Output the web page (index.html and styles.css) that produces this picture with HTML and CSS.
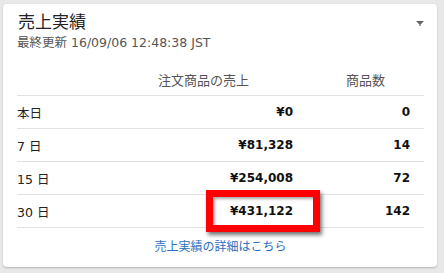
FILE: index.html
```html
<!DOCTYPE html>
<html lang="ja">
<head>
<meta charset="utf-8">
<link rel="stylesheet" href="styles.css">
</head>
<body>
<div class="card">
  <div class="head">
    <div>
      <div class="title">売上実績</div>
      <div class="updated">最終更新 16/09/06 12:48:38 JST</div>
    </div>
    <svg class="caret" width="8" height="5" viewBox="0 0 8 5"><path d="M0 0H8L4.6 3.4V5H3.4V3.4Z" fill="#666"/></svg>
  </div>
  <div class="table">
    <div class="row hrow">
      <div></div>
      <div class="h-val">注文商品の売上</div>
      <div class="h-cnt">商品数</div>
    </div>
    <div class="row">
      <div class="lbl">本日</div>
      <div class="val">¥0</div>
      <div class="cnt">0</div>
    </div>
    <div class="row">
      <div class="lbl">7 日</div>
      <div class="val">¥81,328</div>
      <div class="cnt">14</div>
    </div>
    <div class="row">
      <div class="lbl">15 日</div>
      <div class="val">¥254,008</div>
      <div class="cnt">72</div>
    </div>
    <div class="row">
      <div class="lbl">30 日</div>
      <div class="val mark">¥431,122<span class="hl"></span></div>
      <div class="cnt">142</div>
    </div>
  </div>
  <div class="more"><a href="#">売上実績の詳細はこちら</a></div>
</div>
</body>
</html>
```
FILE: styles.css
```css
* { box-sizing: border-box; }
html, body { margin: 0; }
body {
  background: #e8e8e8;
  padding: 4px 7px 6px 3px;
  font-family: "DejaVu Sans", "Noto Sans CJK JP", sans-serif;
  color: #111;
}
.card {
  width: 434px;
  height: 263px;
  background: #fff;
  border-radius: 4px;
  box-shadow: 0 1px 2px rgba(0,0,0,0.22);
  padding: 8px 13px 0 14px;
}
.head {
  display: flex;
  justify-content: space-between;
  align-items: flex-start;
}
.title {
  font-size: 17px;
  line-height: 20px;
  color: #222;
  padding-left: 1px;
}
.updated {
  margin-top: 2px;
  font-size: 12.5px;
  line-height: 18px;
  color: #555;
}
.caret { margin-top: 9px; }
.table { margin-top: 11px; }
.row {
  display: grid;
  grid-template-columns: 1fr 150px 131px;
  height: 33px;
  align-items: center;
  border-bottom: 1px solid #e2e2e2;
  font-size: 13px;
}
.hrow { color: #555; }
.h-val { text-align: right; padding-right: 44px; }
.h-cnt { text-align: right; padding-right: 39px; }
.lbl { font-size: 12.5px; color: #222; }
.val, .cnt { text-align: right; font-weight: bold; font-size: 12px; }
.cnt { padding-right: 14px; }
.mark { position: relative; }
.hl {
  position: absolute;
  right: -27px;
  top: 50%;
  margin-top: -21px;
  width: 114px;
  height: 42px;
  border: 7px solid #ff0000;
  box-shadow: 2px 3px 4px rgba(0,0,0,0.55), inset 2px 2px 3px rgba(0,0,0,0.35);
}
.more {
  margin-top: 10px;
  text-align: center;
  font-size: 12px;
  line-height: 18px;
}
.more a { color: #2a6fc0; text-decoration: none; }
```
